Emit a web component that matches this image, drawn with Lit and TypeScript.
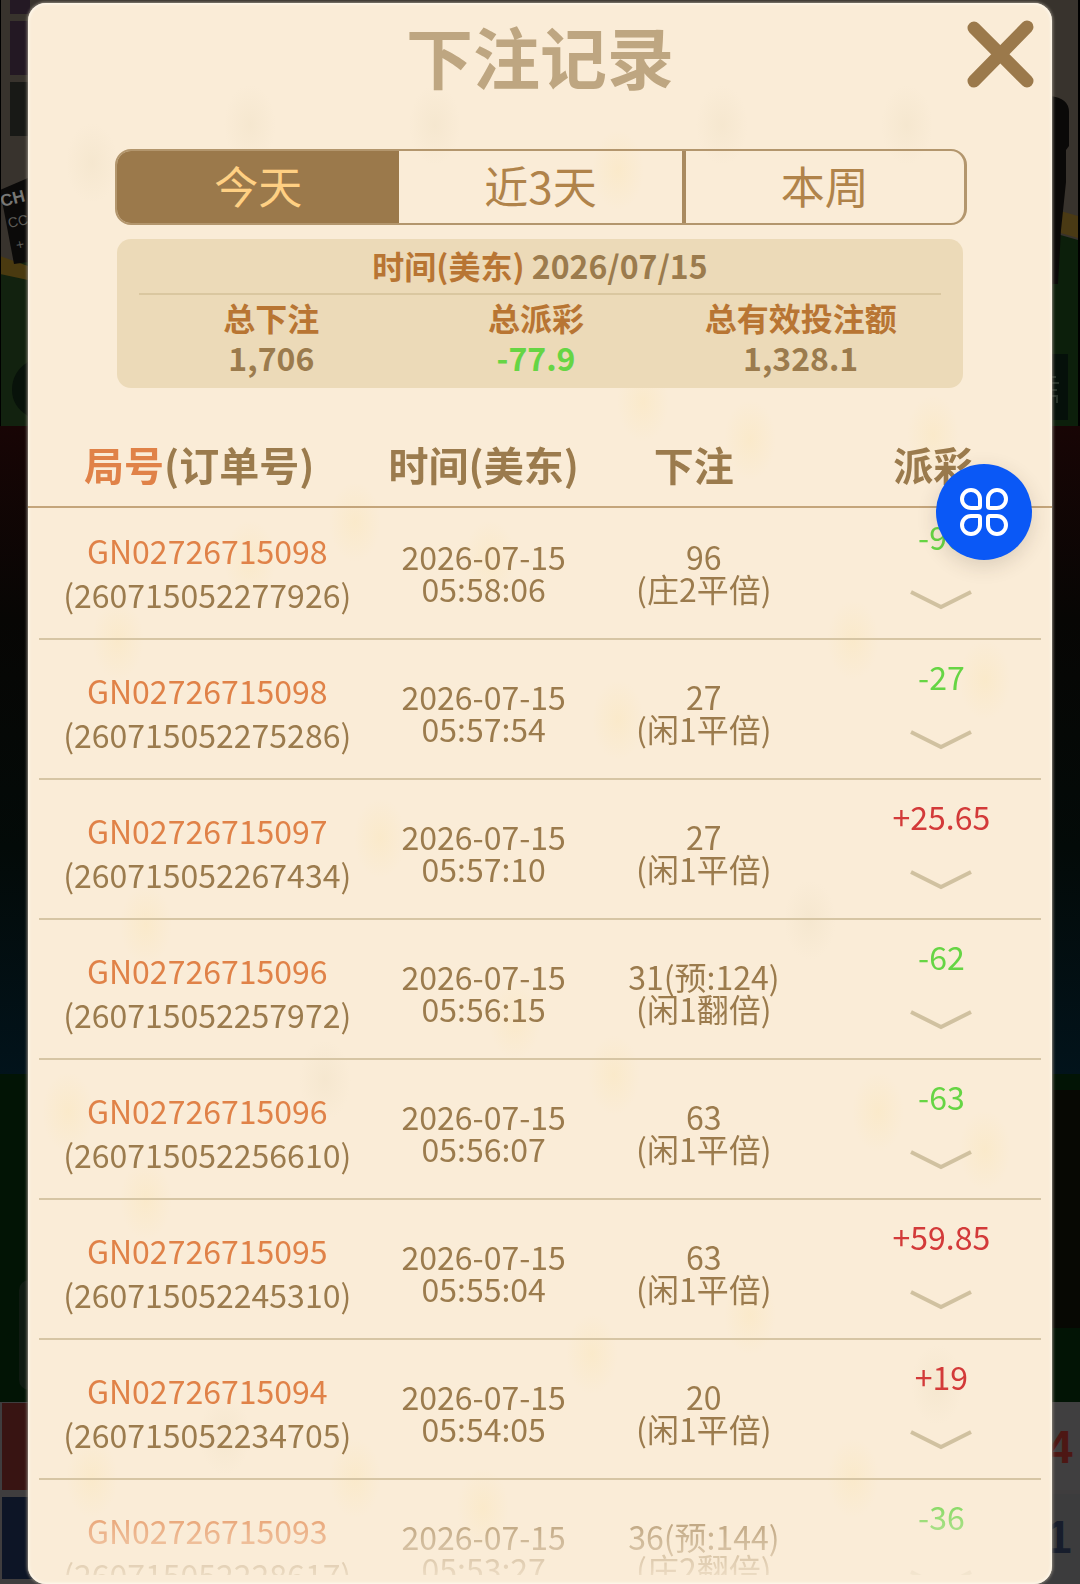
import { LitElement, html, css, svg } from "lit";
import { customElement, property, state } from "lit/decorators.js";

interface Bet {
  round: string;
  order: string;
  date: string;
  time: string;
  amount: string;
  kind: string;
  payout: string;
}

const DATE = "2026-07-15";

const BETS: Bet[] = [
  ["GN02726715098", "260715052277926", "05:58:06", "96", "庄2平倍", "-96"],
  ["GN02726715098", "260715052275286", "05:57:54", "27", "闲1平倍", "-27"],
  ["GN02726715097", "260715052267434", "05:57:10", "27", "闲1平倍", "+25.65"],
  ["GN02726715096", "260715052257972", "05:56:15", "31(预:124)", "闲1翻倍", "-62"],
  ["GN02726715096", "260715052256610", "05:56:07", "63", "闲1平倍", "-63"],
  ["GN02726715095", "260715052245310", "05:55:04", "63", "闲1平倍", "+59.85"],
  ["GN02726715094", "260715052234705", "05:54:05", "20", "闲1平倍", "+19"],
  ["GN02726715093", "260715052228617", "05:53:27", "36(预:144)", "庄2翻倍", "-36"],
].map(([round, order, time, amount, kind, payout]) => ({
  round, order, date: DATE, time, amount, kind, payout,
}));

const TABS = ["今天", "近3天", "本周"];

// Soft paper flecks: centre x, centre y, tone
const FLECKS: [number, number, string][] = [
  [250, 125, "g"], [435, 125, "g"], [722, 125, "g"], [907, 125, "g"], [92, 163, "g"],
  [618, 170, "y"], [643, 402, "y"], [750, 440, "y"], [933, 435, "y"], [355, 522, "y"],
  [250, 560, "y"], [490, 560, "y"], [118, 640, "y"], [853, 640, "y"], [985, 680, "y"],
  [618, 720, "y"], [380, 838, "y"], [810, 920, "g"], [146, 925, "y"], [515, 1020, "y"],
  [325, 1080, "g"], [614, 1075, "y"], [878, 1112, "y"], [68, 1112, "y"], [985, 1150, "y"],
  [146, 1200, "y"], [750, 1315, "y"], [592, 1354, "y"], [937, 1385, "g"], [225, 1435, "g"],
  [92, 1478, "y"], [355, 1478, "y"], [853, 1478, "y"], [483, 1508, "y"],
];

/** Dimmed game table that stays visible beside the dialog. */
@customElement("table-backdrop")
export class TableBackdrop extends LitElement {
  static styles = css`
    :host { position: absolute; inset: 0; display: block; overflow: hidden; background: #050806; }
    svg { display: block; width: 100%; height: 100%; }
    .sign { font: 700 17px "Liberation Sans", sans-serif; fill: #777775; }
    .small { font: 400 14px "Liberation Sans", sans-serif; fill: #5c5b57; }
    .score { font: 700 46px "Liberation Sans", sans-serif; }
    .red { fill: #4d1714; }
    .blue { fill: #171d2c; }
    .faint { font: 700 22px "Noto Sans CJK SC", sans-serif; fill: #1d2a20; }
  `;

  render() {
    return html`
      <svg viewBox="0 0 1080 1584" preserveAspectRatio="none" aria-hidden="true">
        <defs>
          <linearGradient id="felt" x1="0" y1="0" x2="0" y2="1">
            <stop offset="0" stop-color="#180505"></stop>
            <stop offset="0.3" stop-color="#070604"></stop>
            <stop offset="0.65" stop-color="#030a08"></stop>
            <stop offset="1" stop-color="#02131b"></stop>
          </linearGradient>
        </defs>
        <rect width="1080" height="270" fill="#38332d"></rect>
        <rect x="10" y="0" width="20" height="14" fill="#241924"></rect>
        <rect x="10" y="21" width="20" height="54" fill="#231823"></rect>
        <rect x="10" y="82" width="20" height="54" fill="#181916"></rect>
        <path d="M0 262 H1080 V426 H0Z" fill="#12220f"></path>
        <path d="M0 256 L28 266 V280 L0 274Z" fill="#4a3a10"></path>
        <path d="M1050 208 L1078 216 V238 L1050 230Z" fill="#4a3a14"></path>
        <path d="M1050 232 L1078 240 V426 H1050Z" fill="#0c1f0b"></path>
        <path d="M0 190 L28 178 V262 L14 264Z" fill="#0b0a09"></path>
        <text class="sign" x="2" y="207" transform="rotate(-14 2 207)">CH</text>
        <text class="small" x="9" y="228" transform="rotate(-12 9 228)">CC</text>
        <text class="small" x="17" y="250" transform="rotate(-12 17 250)">+</text>
        <path d="M1050 96 Q1069 98 1069 112 V146 L1066 150 V182 L1061 230 L1058 284 H1050Z" fill="#0a0908"></path>
        <path d="M28 362 Q12 372 12 390 Q12 406 28 416Z" fill="#08120a"></path>
        <rect x="1050" y="354" width="18" height="66" fill="#05100a"></rect>
        <path d="M1052 377 H1056 M1052 383 H1059 M1052 390 H1057 M1052 396 H1057 V403" fill="none" stroke="#27332a" stroke-width="2"></path>
        <rect y="426" width="1080" height="648" fill="url(#felt)"></rect>
        <rect y="1074" width="1080" height="328" fill="#021405"></rect>
        <rect x="1050" y="1090" width="30" height="238" fill="#070803"></rect>
        <rect x="19" y="1280" width="20" height="110" rx="10" fill="#101b12"></rect>
        <rect y="1402" width="1080" height="182" fill="#3f3d3e"></rect>
        <rect x="2" y="1403" width="40" height="87" fill="#381412"></rect>
        <rect x="2" y="1497" width="40" height="82" fill="#0d1526"></rect>
        <rect x="1050" y="1402" width="30" height="88" fill="#403f40"></rect>
        <rect x="1050" y="1494" width="30" height="90" fill="#3c3c3d"></rect>
        <text class="score red" x="1047" y="1463">4</text>
        <text class="score blue" x="1046" y="1553">1</text>
        <rect width="1" height="426" fill="#000"></rect>
        <rect x="1078" width="2" height="426" fill="#000"></rect>
      </svg>
    `;
  }
}

/** Totals for the selected period. */
@customElement("bet-summary")
export class BetSummary extends LitElement {
  static styles = css`
    :host {
      display: block;
      padding: 8px 22px 11px;
      border-radius: 14px;
      background: #ecdab8;
      color: #9b7b4d;
      font-size: 32px;
      font-weight: 700;
      line-height: 40px;
      text-align: center;
    }
    .period { padding-bottom: 10px; border-bottom: 2px solid #dac7a0; white-space: pre; line-height: 36px; }
    .label { color: #b87533; }
    .totals { display: grid; grid-template-columns: repeat(3, 1fr); margin: 2px 8px 0 0; }
    dt, dd { margin: 0; white-space: nowrap; }
    .loss { color: #66d544; }
  `;

  render() {
    return html`
      <div class="period"><span class="label">时间(美东)</span> 2026/07/15</div>
      <dl class="totals">
        <div><dt class="label">总下注</dt><dd>1,706</dd></div>
        <div><dt class="label">总派彩</dt><dd class="loss">-77.9</dd></div>
        <div><dt class="label">总有效投注额</dt><dd>1,328.1</dd></div>
      </dl>
    `;
  }
}

@customElement("bet-table")
export class BetTable extends LitElement {
  @property({ attribute: false }) bets: Bet[] = [];

  static styles = css`
    :host {
      display: block;
      overflow: hidden;
      -webkit-mask-image: linear-gradient(to top, rgba(0, 0, 0, 0.15), #000 96px);
      mask-image: linear-gradient(to top, rgba(0, 0, 0, 0.15), #000 96px);
    }
    table { width: 100%; table-layout: fixed; border-collapse: collapse; color: #9b7b4d; }
    .c1 { width: 35%; }
    .c2 { width: 19%; }
    .c3 { width: 24%; }
    .c4 { width: 22%; }
    th {
      height: 84px;
      padding: 0 16px 0 0;
      border-bottom: 2px solid #c4a57b;
      font-size: 40px;
      font-weight: 700;
      line-height: 48px;
      white-space: nowrap;
    }
    th.time { padding: 0; }
    th.bet { padding-right: 20px; }
    th.result { padding-right: 12px; }
    td {
      height: 137px;
      padding: 3px 0 0;
      font-size: 32px;
      line-height: 32px;
      text-align: center;
      white-space: nowrap;
    }
    td.result { padding-left: 4px; }
    tbody tr {
      background: linear-gradient(#d6c5a4, #d6c5a4) center bottom / calc(100% - 22px) 2px no-repeat;
    }
    tbody tr:first-child td { height: 128px; padding-top: 0; padding-bottom: 4px; }
    .ids { line-height: 44px; }
    .accent { color: #e08248; }
    .pay { display: flex; flex-direction: column; align-items: center; gap: 12px; line-height: 44px; }
    .win { color: #d33a39; }
    .loss { color: #66d544; }
    button { display: grid; place-items: center; width: 96px; height: 60px; padding: 0; border: 0; background: none; }
    svg { display: block; }
  `;

  render() {
    return html`
      <table>
        <colgroup><col class="c1" /><col class="c2" /><col class="c3" /><col class="c4" /></colgroup>
        <thead>
          <tr>
            <th scope="col"><span class="accent">局号</span>(订单号)</th>
            <th scope="col" class="time">时间(美东)</th>
            <th scope="col" class="bet">下注</th>
            <th scope="col" class="result">派彩</th>
          </tr>
        </thead>
        <tbody>
          ${this.bets.map((b) => html`
            <tr>
              <td class="ids"><span class="accent">${b.round}</span><br />(${b.order})</td>
              <td>${b.date}<br />${b.time}</td>
              <td>${b.amount}<br />(${b.kind})</td>
              <td class="result">
                <div class="pay">
                  <span class=${b.payout.startsWith("+") ? "win" : "loss"}>${b.payout}</span>
                  <button type="button" aria-label="展开">
                    <svg width="62" height="20" viewBox="0 0 62 20" fill="none" stroke="#d0c1a0" stroke-width="4">
                      <path d="M1 2 L31 17 L61 2"></path>
                    </svg>
                  </button>
                </div>
              </td>
            </tr>`)}
        </tbody>
      </table>
    `;
  }
}

@customElement("app-root")
export class AppRoot extends LitElement {
  @state() private active = 0;

  static styles = css`
    :host {
      position: relative;
      display: flex;
      box-sizing: border-box;
      height: 100vh;
      padding: 3px 28px 0;
      overflow: hidden;
      font-family: "Noto Sans CJK SC", sans-serif;
    }
    .dialog {
      position: relative;
      display: flex;
      flex: 1;
      flex-direction: column;
      min-width: 0;
      padding-bottom: 9px;
      border-radius: 18px;
      background: #faecd7;
      box-shadow: 0 0 3px 1px #8d867b, inset 0 0 3px 1px #fffaf0;
    }
    .flecks { position: absolute; inset: 0; width: 100%; height: 100%; }
    .head { position: relative; display: grid; grid-template-columns: 86px 1fr 86px; height: 108px; }
    h1 {
      grid-column: 2;
      margin: 0;
      color: #bea681;
      font-size: 67px;
      font-weight: 700;
      line-height: 104px;
      text-align: center;
    }
    button { padding: 0; border: 0; background: none; font: inherit; cursor: pointer; }
    .close { display: block; align-self: start; margin-top: 16px; width: 70px; height: 70px; }
    .tabs {
      position: relative;
      display: grid;
      grid-template-columns: repeat(3, 1fr);
      box-sizing: border-box;
      height: 76px;
      margin: 38px 85px 0 87px;
      overflow: hidden;
      border: 2px solid #b3966d;
      border-right-width: 3px;
      border-radius: 16px;
    }
    .tab { padding-bottom: 4px; color: #b0834a; font-size: 44px; line-height: 68px; }
    .tab + .tab + .tab { border-left: 4px solid #a98a60; }
    .tab.on { background: #9b794b; color: #ffd083; }
    bet-summary { position: relative; margin: 14px 89px 34px; }
    bet-table { position: relative; flex: 1; min-height: 0; }
    .fab {
      position: absolute;
      top: 464px;
      right: 48px;
      display: grid;
      place-items: center;
      width: 96px;
      height: 96px;
      border-radius: 50%;
      background: #0a58f6;
      box-shadow: 0 6px 20px rgba(60, 50, 40, 0.16);
    }
  `;

  render() {
    return html`
      <table-backdrop></table-backdrop>
      <section class="dialog" role="dialog" aria-labelledby="title">
        <svg class="flecks" viewBox="28 3 1024 1581" preserveAspectRatio="none" aria-hidden="true">
          <defs>
            <radialGradient id="y"><stop offset="0" stop-color="#fbe6b8" stop-opacity="0.4"></stop><stop offset="1" stop-color="#fbe6b8" stop-opacity="0"></stop></radialGradient>
            <radialGradient id="g"><stop offset="0" stop-color="#efe0c4" stop-opacity="0.4"></stop><stop offset="1" stop-color="#efe0c4" stop-opacity="0"></stop></radialGradient>
          </defs>
          ${FLECKS.map(([x, y, tone]) => svg`<ellipse cx=${x} cy=${y} rx="26" ry="40" fill="url(#${tone})"></ellipse>`)}
        </svg>
        <header class="head">
          <h1 id="title">下注记录</h1>
          <button class="close" type="button" aria-label="关闭">
            <svg width="70" height="70" viewBox="0 0 70 70" stroke="#9b794b" stroke-width="13" stroke-linecap="round">
              <path d="M8 9 L61 62 M61 8 L8 62"></path>
            </svg>
          </button>
        </header>
        <nav class="tabs">
          ${TABS.map((t, i) => html`
            <button type="button" class=${i === this.active ? "tab on" : "tab"} @click=${() => (this.active = i)}>${t}</button>`)}
        </nav>
        <bet-summary></bet-summary>
        <bet-table .bets=${BETS}></bet-table>
      </section>
      <button class="fab" type="button" aria-label="菜单">
        <svg width="48" height="48" viewBox="0 0 48 48" fill="none" stroke="#fff" stroke-width="4">
          <path d="M11 2 A9 9 0 0 0 11 20 H18 Q20 20 20 18 V11 A9 9 0 0 0 11 2Z"></path>
          <path d="M37 2 A9 9 0 0 1 37 20 H30 Q28 20 28 18 V11 A9 9 0 0 1 37 2Z"></path>
          <path d="M11 46 A9 9 0 0 1 11 28 H18 Q20 28 20 30 V37 A9 9 0 0 1 11 46Z"></path>
          <path d="M37 46 A9 9 0 0 0 37 28 H30 Q28 28 28 30 V37 A9 9 0 0 0 37 46Z"></path>
        </svg>
      </button>
    `;
  }
}
